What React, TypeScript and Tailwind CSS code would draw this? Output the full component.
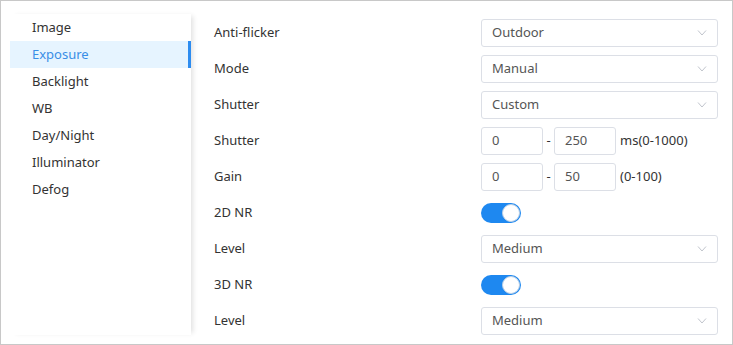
import React from "react";

const menu = ["Image", "Exposure", "Backlight", "WB", "Day/Night", "Illuminator", "Defog"];

const Chevron = () => (
  <svg width="10" height="6" viewBox="0 0 10 6" fill="none">
    <path d="M1 0.5L5 5L9 0.5" stroke="#c0c4cc" strokeWidth="1" />
  </svg>
);

const Select = ({ value }: any) => (
  <div className="w-[237px] h-[28px] border border-[#dcdfe6] rounded-[3px] flex items-center justify-between pl-[10px] pr-[10px] text-[#555]">
    <span>{value}</span>
    <Chevron />
  </div>
);

const Input = ({ value }: any) => (
  <div className="w-[62px] h-[28px] border border-[#dcdfe6] rounded-[3px] flex items-center pl-[10px] text-[#555]">
    {value}
  </div>
);

const Range = ({ from, to, hint }: any) => (
  <div className="flex items-center">
    <Input value={from} />
    <span className="w-[11px] text-center text-[#333]">-</span>
    <Input value={to} />
    <span className="ml-[4px] text-[#333]">{hint}</span>
  </div>
);

const Toggle = () => (
  <div className="w-[40px] h-[20px] rounded-full bg-[#1e88f0] flex items-center justify-end p-[1px]">
    <div className="w-[18px] h-[18px] rounded-full bg-white border border-[#b9cfe6]" />
  </div>
);

const Row = ({ label, children }: any) => (
  <div className="h-[36px] flex items-center">
    <div className="w-[267px] text-[#333]">{label}</div>
    {children}
  </div>
);

export default function App() {
  return (
    <div
      className="w-[733px] h-[345px] border border-[#c8c8c8] bg-white flex text-[13px] overflow-hidden"
      style={{ fontFamily: '"Noto Sans", "Open Sans", sans-serif' }}
    >
      <div className="mt-[13px] ml-[9px] w-[181px] h-[321px] shadow-[4px_0_5px_-2px_rgba(0,0,0,0.12)]">
        {menu.map((m) =>
          m === "Exposure" ? (
            <div
              key={m}
              className="h-[27px] flex items-center pl-[22px] bg-[#e6f4ff] text-[#3a8ee6] border-r-[3px] border-[#2d8cf0]"
            >
              {m}
            </div>
          ) : (
            <div key={m} className="h-[27px] flex items-center pl-[22px] text-[#333]">
              {m}
            </div>
          )
        )}
      </div>
      <div className="pl-[23px] pt-[14px] flex flex-col">
        <Row label="Anti-flicker">
          <Select value="Outdoor" />
        </Row>
        <Row label="Mode">
          <Select value="Manual" />
        </Row>
        <Row label="Shutter">
          <Select value="Custom" />
        </Row>
        <Row label="Shutter">
          <Range from="0" to="250" hint="ms(0-1000)" />
        </Row>
        <Row label="Gain">
          <Range from="0" to="50" hint="(0-100)" />
        </Row>
        <Row label="2D NR">
          <Toggle />
        </Row>
        <Row label="Level">
          <Select value="Medium" />
        </Row>
        <Row label="3D NR">
          <Toggle />
        </Row>
        <Row label="Level">
          <Select value="Medium" />
        </Row>
      </div>
    </div>
  );
}
